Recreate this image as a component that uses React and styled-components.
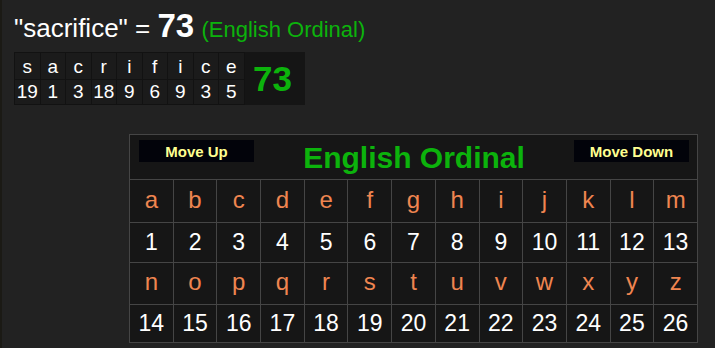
import styled, { createGlobalStyle } from "styled-components";

const GlobalStyle = createGlobalStyle`
  body {
    margin: 0;
    background: #222222;
    font-family: "Liberation Sans", Arial, sans-serif;
  }
`;

const word = "sacrifice";
const value = (ch) => ch.charCodeAt(0) - 96;
const alphabet = "abcdefghijklmnopqrstuvwxyz".split("");

const App = () => {
  const letters = word.split("");
  const total = letters.reduce((s, c) => s + value(c), 0);
  const halves = [alphabet.slice(0, 13), alphabet.slice(13)];
  return (
    <Page>
      <GlobalStyle />
      <Heading>
        "{word}" = <Total>{total}</Total> <Cipher>(English Ordinal)</Cipher>
      </Heading>
      <WordTable>
        <WordGrid $count={letters.length}>
          {letters.map((c, i) => (
            <WordCell key={"l" + i}>{c}</WordCell>
          ))}
          {letters.map((c, i) => (
            <WordCell key={"n" + i} $num>
              {value(c)}
            </WordCell>
          ))}
        </WordGrid>
        <SumCell>{total}</SumCell>
      </WordTable>
      <Chart>
        <tbody>
          <tr>
            <HeaderCell colSpan={13}>
              <HeaderBar>
                <MoveButton>Move Up</MoveButton>
                <ChartTitle>English Ordinal</ChartTitle>
                <MoveButton>Move Down</MoveButton>
              </HeaderBar>
            </HeaderCell>
          </tr>
          {halves.map((half, h) => [
            <LetterRow key={"lr" + h} $second={h === 1}>
              {half.map((c) => (
                <LetterCell key={c}>{c}</LetterCell>
              ))}
            </LetterRow>,
            <NumberRow key={"nr" + h} $last={h === 1}>
              {half.map((c) => (
                <NumberCell key={c}>{value(c)}</NumberCell>
              ))}
            </NumberRow>,
          ])}
        </tbody>
      </Chart>
    </Page>
  );
};

const Page = styled.div`
  min-height: 348px;
  box-sizing: border-box;
  border-left: 2px solid #1b1a15;
  padding: 10px 0 0 12px;
`;

const Heading = styled.div`
  color: #ffffff;
  font-size: 26px;
  line-height: 32px;
  white-space: nowrap;
`;

const Total = styled.span`
  font-weight: bold;
  font-size: 33px;
`;

const Cipher = styled.span`
  color: #0cb30c;
  font-size: 22px;
`;

const WordTable = styled.div`
  display: inline-flex;
  margin-top: 6px;
  background: #121212;
`;

const WordGrid = styled.div`
  display: grid;
  grid-template-columns: repeat(${(p) => p.$count}, 24.5px);
  grid-template-rows: 26px 24px;
  gap: 1px;
  padding: 1px;
`;

const WordCell = styled.div`
  background: #1b1b1b;
  color: #ffffff;
  font-size: 19px;
  display: flex;
  align-items: center;
  justify-content: center;
  padding-top: ${(p) => (p.$num ? "0" : "1px")};
`;

const SumCell = styled.div`
  width: 60px;
  background: #151515;
  color: #0cb30c;
  font-size: 35px;
  font-weight: bold;
  display: flex;
  align-items: center;
  justify-content: center;
  padding-right: 4px;
  box-sizing: border-box;
`;

const Chart = styled.table`
  margin: 29px 0 0 115px;
  border-collapse: collapse;
  table-layout: fixed;
  width: 569px;
  background: #161616;
  border: 1px solid #454545;
`;

const HeaderCell = styled.td`
  height: 44px;
  padding: 0;
  border: 1px solid #454545;
`;

const HeaderBar = styled.div`
  display: flex;
  align-items: center;
  justify-content: space-between;
  padding: 0 8px 0 9px;
  height: 44px;
`;

const MoveButton = styled.div`
  align-self: flex-start;
  margin-top: 5px;
  width: 115px;
  height: 22px;
  background: #02030a;
  color: #ffff90;
  font-size: 15px;
  font-weight: bold;
  display: flex;
  align-items: center;
  justify-content: center;
`;

const ChartTitle = styled.div`
  color: #0cb30c;
  font-size: 30px;
  font-weight: bold;
  padding-top: 1px;
`;

const LetterRow = styled.tr`
  height: ${(p) => (p.$second ? "42px" : "43px")};
`;

const NumberRow = styled.tr`
  height: ${(p) => (p.$last ? "38px" : "40px")};
`;

const LetterCell = styled.td`
  border: 1px solid #454545;
  padding: 0 0 3px;
  text-align: center;
  color: #ef8550;
  font-size: 24px;
`;

const NumberCell = styled.td`
  border: 1px solid #454545;
  padding: 0;
  text-align: center;
  color: #ffffff;
  font-size: 23px;
`;

export default App;
